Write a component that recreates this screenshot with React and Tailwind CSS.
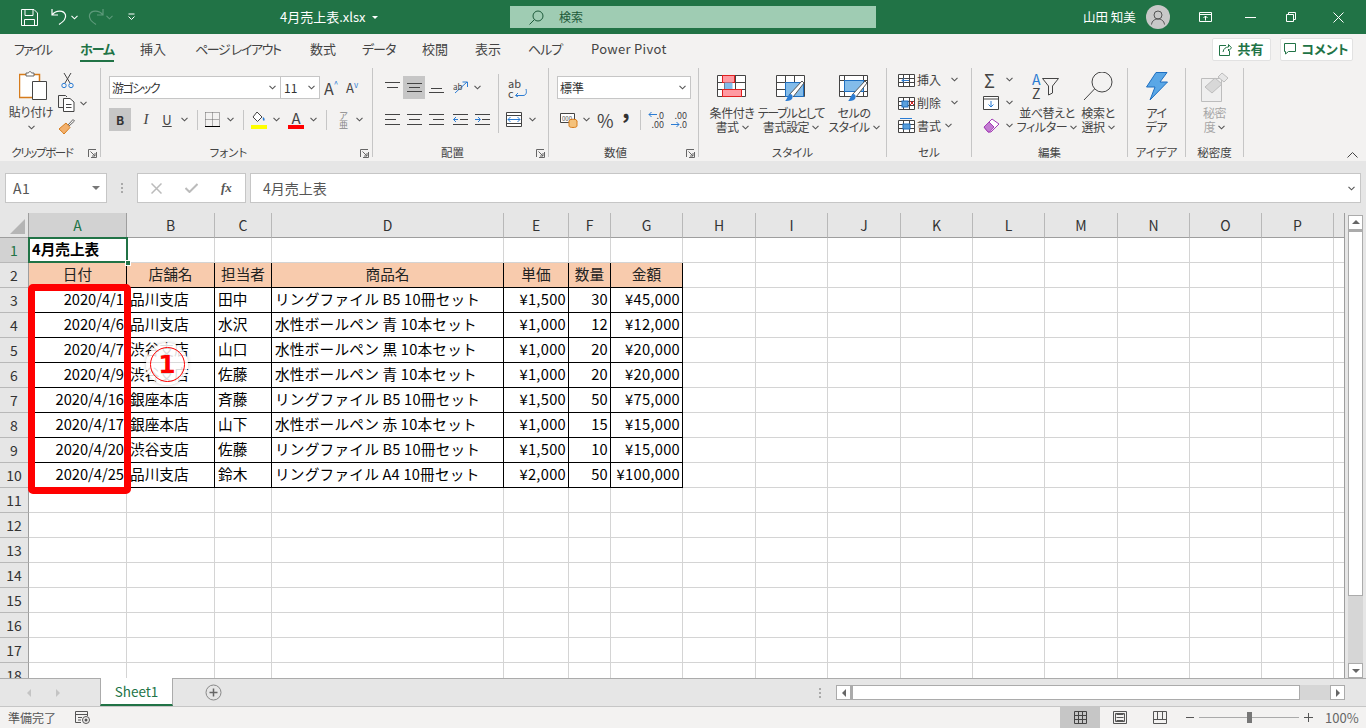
import React from "react";

const Chevron = ({ color = "#555", className = "" }) => (
  <svg width="7" height="5" viewBox="0 0 7 5" className={className}>
    <path d="M0.5 0.8 L3.5 3.8 L6.5 0.8" fill="none" stroke={color} strokeWidth="1.1" />
  </svg>
);

const Launcher = () => (
  <svg width="9" height="9" viewBox="0 0 9 9" className="absolute right-[3px] top-[4px]">
    <path d="M0.5 8V0.5H8M8.5 3V8.5H3M2.5 2.5L7 7M7 4V7H4" fill="none" stroke="#666" strokeWidth="1" />
  </svg>
);

const Lines = ({ widths, y = [2, 7, 12] }) => (
  <svg width="15" height="15" viewBox="0 0 15 15">
    {widths.map((w, i) => (
      <path key={i} d={`M${w[0]} ${y[i] + 0.5}H${w[1]}`} stroke="#444" strokeWidth="1" />
    ))}
  </svg>
);

const GridIcon = ({ children }) => (
  <svg width="18" height="16" viewBox="0 0 18 16">
    <path d="M0.5 2.5H16.5V14.5H0.5ZM0.5 6.5H16.5M0.5 10.5H16.5M5.5 2.5V14.5M11.5 2.5V14.5" fill="#fff" stroke="#444" />
    {children}
  </svg>
);

function TitleBar() {
  return (
    <div className="h-[34px] bg-[#217346] flex items-center text-white text-[12px]">
      <svg width="17" height="17" viewBox="0 0 17 17" className="ml-[21px]">
        <path d="M0.5 0.5H13L16.5 4V16.5H0.5ZM4 0.5V6.5H12V0.5M3.5 16.5V10.5H13.5V16.5" fill="none" stroke="#fff" />
      </svg>
      <svg width="17" height="18" viewBox="0 0 17 18" className="ml-[13px]">
        <path d="M1 1V7H7M1.5 6.5C5 2 13 2 14.5 7C15.5 11 12 14 8 16.5" fill="none" stroke="#fff" strokeWidth="1.2" />
      </svg>
      <Chevron color="#fff" className="ml-[3px]" />
      <svg width="17" height="18" viewBox="0 0 17 18" className="ml-[9px]">
        <path d="M16 1V7H10M15.5 6.5C12 2 4 2 2.5 7C1.5 11 5 14 9 16.5" fill="none" stroke="#5e9a7b" strokeWidth="1.2" />
      </svg>
      <Chevron color="#5e9a7b" className="ml-[2px]" />
      <svg width="7" height="8" viewBox="0 0 7 8" className="ml-[15px]">
        <path d="M0.5 1H6.5M0.5 3.5L3.5 6.5L6.5 3.5" fill="none" stroke="#fff" />
      </svg>
      <span className="ml-[145px] w-[87px] text-[13px] whitespace-nowrap">4月売上表.xlsx</span>
      <span className="ml-[5px] w-0 h-0 border-x-[3px] border-x-transparent border-t-[3px] border-t-white" />
      <div className="ml-[132px] w-[366px] h-[22px] bg-[#9fccb3] flex items-center text-[#1d5a3a]">
        <svg width="15" height="15" viewBox="0 0 15 15" className="ml-[19px]">
          <circle cx="9" cy="6" r="5" fill="none" stroke="#1d5a3a" />
          <path d="M5.5 9.5L0.5 14.5" stroke="#1d5a3a" />
        </svg>
        <span className="ml-[15px]">検索</span>
      </div>
      <span className="ml-[207px] w-[54px] whitespace-nowrap text-[12.5px]">山田 知美</span>
      <div className="ml-[9px] w-[24px] h-[24px] rounded-full bg-[#c8c8c8] flex items-center justify-center">
        <svg width="14" height="15" viewBox="0 0 14 15">
          <circle cx="7" cy="5" r="4" fill="none" stroke="#555" />
          <path d="M0.5 14.5C1 10.5 4 9 7 9C10 9 13 10.5 13.5 14.5" fill="none" stroke="#555" />
        </svg>
      </div>
      <svg width="13" height="11" viewBox="0 0 13 11" className="ml-[29px]">
        <path d="M0.5 0.5H12.5V9.5H0.5ZM0.5 2.5H12.5M6.5 8.5V4M4.5 6L6.5 4L8.5 6" fill="none" stroke="#fff" />
      </svg>
      <svg width="11" height="1" viewBox="0 0 11 1" className="ml-[33px]">
        <path d="M0 0.5H11" stroke="#fff" />
      </svg>
      <svg width="10" height="10" viewBox="0 0 10 10" className="ml-[30px]">
        <path d="M0.5 2.5H7.5V9.5H0.5ZM2.5 2.5V0.5H9.5V7.5H7.5" fill="none" stroke="#fff" />
      </svg>
      <svg width="11" height="11" viewBox="0 0 11 11" className="ml-[37px]">
        <path d="M0.5 0.5L10.5 10.5M10.5 0.5L0.5 10.5" fill="none" stroke="#fff" />
      </svg>
    </div>
  );
}

function TabBar() {
  const tabs = [
    { label: "ファイル", cls: "w-[66px] tracking-[-2px]" },
    { label: "ホーム", cls: "w-[60px] font-bold text-[#217346] tracking-[-1px]" },
    { label: "挿入", cls: "w-[55px]" },
    { label: "ページ レイアウト", cls: "w-[115px] tracking-[-1.4px]" },
    { label: "数式", cls: "w-[52px]" },
    { label: "データ", cls: "w-[60px] tracking-[-1px]" },
    { label: "校閲", cls: "w-[53px]" },
    { label: "表示", cls: "w-[53px]" },
    { label: "ヘルプ", cls: "w-[63px] tracking-[-1px]" },
    { label: "Power Pivot", cls: "w-[80px] tracking-[0.3px]" },
  ];
  return (
    <div className="h-[30px] bg-[#f3f2f1] flex items-center pl-[14px] text-[13px] text-[#444] relative [font-feature-settings:'palt']">
      {tabs.map((t) => (
        <span key={t.label} className={`${t.cls} relative whitespace-nowrap`}>
          {t.label}
          {t.label === "ホーム" && <span className="absolute left-0 top-[21px] w-[34px] h-[2px] bg-[#217346]" />}
        </span>
      ))}
      <div className="ml-auto mr-[13px] flex gap-[9px]">
        <div className="w-[59px] h-[23px] bg-white border border-[#e2e2e2] rounded-[2px] flex items-center justify-center gap-[5px] text-[#217346] font-bold">
          <svg width="13" height="13" viewBox="0 0 13 13">
            <path d="M7 2.5H0.5V12.5H10.5V8M4 9C4.5 5.5 7 4 9.5 4V1.5L12.5 4.8L9.5 8V6" fill="none" stroke="#217346" />
          </svg>
          共有
        </div>
        <div className="w-[73px] h-[23px] bg-white border border-[#e2e2e2] rounded-[2px] flex items-center justify-center gap-[5px] text-[#217346] font-bold">
          <svg width="12" height="12" viewBox="0 0 12 12">
            <path d="M0.5 0.5H11.5V8.5H4.5L1.5 11V8.5H0.5Z" fill="none" stroke="#217346" />
          </svg>
          コメント
        </div>
      </div>
    </div>
  );
}

const Group = ({ label, cls, labelCls = "", launcher, children }) => (
  <div className={`${cls} h-[89px] mt-[4px] border-r border-[#c6c6c6] flex flex-col shrink-0`}>
    <div className="flex-1 min-h-0">{children}</div>
    <div
      className={`relative h-[15px] -mb-[3px] leading-[15px] text-center text-[11.5px] text-[#444] whitespace-nowrap [font-feature-settings:'palt'] ${
        launcher ? "pr-[16px]" : ""
      } ${labelCls}`}
    >
      {label}
      {launcher && <Launcher />}
    </div>
  </div>
);

const Row = ({ cls = "", children }) => <div className={`flex items-center h-[23px] ${cls}`}>{children}</div>;

function Clipboard() {
  return (
    <Group label="クリップボード" cls="w-[101px]" labelCls="tracking-[-1.4px]" launcher>
      <div className="flex h-full">
        <div className="w-[58px] pl-[4px] pt-[3px] flex flex-col items-center">
          <svg width="28" height="30" viewBox="0 0 28 30" className="ml-[3px]">
            <path d="M0.5 3.5H20.5V26.5H0.5Z" fill="#fff" stroke="#d67c1c" strokeWidth="1.5" />
            <path d="M7 5V2H9.5C10 0 12 0 12.5 2H15V5Z" fill="#fff" stroke="#666" />
            <path d="M13.5 10.5H27.5V28.5H13.5Z" fill="#fff" stroke="#444" />
          </svg>
          <span className="mt-[4px] text-[12px] text-[#444] leading-[14px] whitespace-nowrap tracking-[-0.3px] [font-feature-settings:'palt']">貼り付け</span>
          <Chevron className="mt-[6px]" />
        </div>
        <div className="pt-[4px] flex flex-col gap-[6px]">
          <svg width="13" height="17" viewBox="0 0 13 17" className="ml-[3px]">
            <path d="M3 1L9 11M10 1L4 11" fill="none" stroke="#444" />
            <circle cx="3" cy="13.5" r="2.2" fill="none" stroke="#2b7cd3" />
            <circle cx="10" cy="13.5" r="2.2" fill="none" stroke="#2b7cd3" />
          </svg>
          <div className="flex items-center gap-[5px]">
            <svg width="17" height="17" viewBox="0 0 17 17">
              <path d="M5 12.5H0.5V0.5H7.5L9 2" fill="none" stroke="#444" />
              <path d="M5.5 3.5H12L16 7V16.5H5.5ZM8 9.5H13.5M8 12.5H13.5" fill="#fff" stroke="#444" />
            </svg>
            <Chevron />
          </div>
          <svg width="17" height="17" viewBox="0 0 17 17">
            <path d="M10 7L15 1.5L16.5 3L11 8" fill="none" stroke="#666" />
            <path d="M1 11L8 5L12 9.5L6 16C4 14 2.5 12 1 11Z" fill="#f2b06c" stroke="#d67c1c" />
          </svg>
        </div>
      </div>
    </Group>
  );
}

function FontGroup() {
  return (
    <Group label="フォント" cls="w-[272px]" launcher>
      <div className="pt-[8px] pl-[8px]">
        <Row>
          <div className="w-[172px] h-[23px] bg-white border border-[#c6c6c6] flex items-center pl-[2px] pr-[4px] text-[12px] text-[#333] justify-between">
            <span className="tracking-[-1.5px] [font-feature-settings:'palt']">游ゴシック</span>
            <Chevron />
          </div>
          <div className="w-[40px] -ml-[1px] h-[23px] bg-white border border-[#c6c6c6] flex items-center pl-[3px] pr-[4px] text-[12px] text-[#333] justify-between">
            11
            <Chevron />
          </div>
          <span className="ml-[4px] w-[22px] text-[16px] text-[#444] leading-none">
            A<span className="text-[8px] align-top text-[#2b7cd3]">^</span>
          </span>
          <span className="w-[17px] text-[13px] text-[#444] leading-none">
            A<span className="text-[8px] align-top text-[#2b7cd3]">v</span>
          </span>
        </Row>
        <Row cls="mt-[9px]">
          <span className="w-[22px] h-[23px] bg-[#c6c6c6] flex items-center justify-center text-[12px] font-bold text-[#333]">B</span>
          <span className="ml-[8px] w-[14px] text-center text-[15px] italic text-[#444] font-['Liberation_Serif',serif]">I</span>
          <span className="ml-[7px] w-[14px] text-center text-[13px] text-[#444] underline">U</span>
          <Chevron className="ml-[7px]" />
          <span className="ml-[9px] h-[20px] w-px bg-[#c6c6c6]" />
          <svg width="15" height="15" viewBox="0 0 15 15" className="ml-[7px]">
            <path d="M0.5 0.5H14.5V14.5M0.5 0.5V14.5M7.5 0.5V14.5M0.5 7.5H14.5" fill="none" stroke="#666" strokeDasharray="1 1" />
            <path d="M0 14.5H15" stroke="#000" />
          </svg>
          <Chevron className="ml-[7px]" />
          <span className="ml-[9px] h-[20px] w-px bg-[#c6c6c6]" />
          <div className="ml-[7px] w-[16px] h-[18px] flex flex-col items-center justify-between">
            <svg width="14" height="12" viewBox="0 0 14 12">
              <path d="M5 1L1 6L5.5 10.5L10 6Z" fill="#fff" stroke="#444" />
              <path d="M11 6C13 7 13 9 12 10C10.5 9.5 10.5 7 11 6Z" fill="#2b7cd3" />
            </svg>
            <span className="w-[16px] h-[4px] bg-[#ffff00]" />
          </div>
          <Chevron className="ml-[6px]" />
          <div className="ml-[8px] w-[16px] h-[18px] flex flex-col items-center justify-between">
            <span className="text-[15px] leading-[14px] text-[#444]">A</span>
            <span className="w-[16px] h-[4px] bg-[#ff0000]" />
          </div>
          <Chevron className="ml-[6px]" />
          <span className="ml-[9px] h-[20px] w-px bg-[#c6c6c6]" />
          <div className="ml-[11px] w-[11px] flex flex-col items-center leading-[9px] text-[9px] text-[#888]">
            <span>ア</span>
            <span>亜</span>
          </div>
          <Chevron className="ml-[7px]" />
        </Row>
      </div>
    </Group>
  );
}

function AlignGroup() {
  return (
    <Group label="配置" cls="w-[176px]" launcher>
      <div className="pt-[8px] pl-[8px] flex">
        <div className="w-[117px] flex flex-col gap-[9px]">
          <Row>
            <span className="w-[22px] flex justify-center"><Lines widths={[[0, 15], [2, 13]]} /></span>
            <span className="w-[22px] h-[23px] bg-[#c6c6c6] flex items-center justify-center"><Lines widths={[[0, 15], [2, 13], [0, 15]]} y={[3, 7, 11]} /></span>
            <span className="w-[22px] flex justify-center"><Lines widths={[[2, 13], [0, 15]]} y={[8, 12]} /></span>
            <svg width="18" height="16" viewBox="0 0 18 16" className="ml-[6px]">
              <path d="M2 13L14 2M9.5 2H14.5V7" fill="none" stroke="#2b7cd3" />
              <text x="0" y="10" fontSize="8" fill="#444">ab</text>
            </svg>
            <Chevron className="ml-[3px]" />
          </Row>
          <Row>
            <span className="w-[22px] flex justify-center"><Lines widths={[[0, 15], [0, 11], [0, 15]]} /></span>
            <span className="w-[22px] flex justify-center"><Lines widths={[[0, 15], [2, 13], [0, 15]]} /></span>
            <span className="w-[22px] flex justify-center"><Lines widths={[[0, 15], [4, 15], [0, 15]]} /></span>
            <svg width="15" height="15" viewBox="0 0 15 15" className="ml-[6px]">
              <path d="M0 2.5H15M7 7.5H15M0 12.5H15" stroke="#444" />
              <path d="M5 7.5H0.5M3 5L0.5 7.5L3 10" fill="none" stroke="#2b7cd3" />
            </svg>
            <svg width="15" height="15" viewBox="0 0 15 15" className="ml-[7px]">
              <path d="M0 2.5H15M7 7.5H15M0 12.5H15" stroke="#444" />
              <path d="M0 7.5H5M3 5L5.5 7.5L3 10" fill="none" stroke="#2b7cd3" />
            </svg>
          </Row>
        </div>
        <span className="h-[59px] w-px bg-[#c6c6c6] -mt-[2px]" />
        <div className="ml-[7px] flex flex-col gap-[9px]">
          <Row>
            <div className="relative ml-[2px] w-[20px] h-[20px] leading-[10px] text-[11px] text-[#444]">
              ab
              <br />c
              <svg width="13" height="9" viewBox="0 0 13 9" className="absolute left-[7px] top-[10px]">
                <path d="M1 7.5H8C11 7.5 12 5 11 1M3 5L0.5 7.5L3 9" fill="none" stroke="#2b7cd3" />
              </svg>
            </div>
          </Row>
          <Row>
            <svg width="16" height="15" viewBox="0 0 16 15">
              <path d="M0.5 0.5H15.5V14.5H0.5ZM0.5 3.5H15.5M0.5 11.5H15.5" fill="#fff" stroke="#444" />
              <path d="M2 7.5H14M4.5 5L2 7.5L4.5 10M11.5 5L14 7.5L11.5 10" fill="none" stroke="#2b7cd3" />
            </svg>
            <Chevron className="ml-[7px]" />
          </Row>
        </div>
      </div>
    </Group>
  );
}

function NumberGroup() {
  return (
    <Group label="数値" cls="w-[150px]" launcher>
      <div className="pt-[8px] pl-[8px]">
        <Row>
          <div className="w-[134px] h-[23px] bg-white border border-[#c6c6c6] flex items-center justify-between pl-[2px] pr-[4px] text-[12px] text-[#333]">
            標準
            <Chevron />
          </div>
        </Row>
        <Row cls="mt-[9px]">
          <svg width="18" height="17" viewBox="0 0 18 17" className="ml-[3px]">
            <path d="M0.5 2.5H14.5V11.5H0.5Z" fill="#fff" stroke="#444" />
            <text x="2" y="9.5" fontSize="6" fill="#444">000</text>
            <ellipse cx="13" cy="10" rx="4" ry="1.8" fill="#f4c27c" stroke="#d67c1c" />
            <path d="M9 10V15C9 17 17 17 17 15V10" fill="#f4c27c" stroke="#d67c1c" />
          </svg>
          <Chevron className="ml-[5px]" />
          <span className="ml-[7px] w-[17px] text-[18px] leading-none text-[#444]">%</span>
          <span className="ml-[8px] w-[9px] text-[24px] leading-[14px] font-bold text-[#333] h-[18px] -translate-y-[10px]">,</span>
          <span className="ml-[9px] h-[20px] w-px bg-[#c6c6c6]" />
          <div className="ml-[7px] w-[16px] relative h-[18px] leading-[9px] text-[9px] text-[#444] text-right">
            .0
            <br />.00
            <svg width="9" height="7" viewBox="0 0 9 7" className="absolute left-0 top-0">
              <path d="M9 3.5H1M3.5 1L1 3.5L3.5 6" fill="none" stroke="#2b7cd3" />
            </svg>
          </div>
          <div className="ml-[7px] w-[16px] relative h-[18px] leading-[9px] text-[9px] text-[#444] text-right">
            .00
            <br />.0
            <svg width="9" height="7" viewBox="0 0 9 7" className="absolute left-0 top-[10px]">
              <path d="M0 3.5H8M5.5 1L8 3.5L5.5 6" fill="none" stroke="#2b7cd3" />
            </svg>
          </div>
        </Row>
      </div>
    </Group>
  );
}

const Brush = () => (
  <>
    <path d="M13 21L26 7L28 9L17 23" fill="#fff" stroke="#555" />
    <path d="M9 27C11 26 11 22 14 20C17 20 17 23 16 25C14 27 11 27 9 27Z" fill="#2b7cd3" />
  </>
);

const TableGrid = ({ children }) => (
  <svg width="30" height="28" viewBox="0 0 30 28">
    {children}
  </svg>
);

const BigButton = ({ cls, icon, l1, l2, l1Cls = "tracking-[-0.4px]", chevron = true, color = "text-[#444]" }) => (
  <div className={`${cls} flex flex-col items-center pt-[6px]`}>
    <div className="h-[31px]">{icon}</div>
    <span className={`mt-[1px] h-[14px] text-[12px] leading-[14px] whitespace-nowrap ${l1Cls} ${color} [font-feature-settings:'palt']`}>{l1}</span>
    <span className={`h-[14px] text-[12px] leading-[14px] whitespace-nowrap tracking-[-0.4px] flex items-center gap-[3px] ${color} [font-feature-settings:'palt']`}>
      {l2}
      {chevron && <Chevron />}
    </span>
  </div>
);

function StyleGroup() {
  return (
    <Group label="スタイル" cls="w-[188px]">
      <div className="flex pl-[8px]">
        <BigButton
          cls="w-[50px]"
          l1="条件付き"
          l2="書式"
          icon={
            <TableGrid>
              <path d="M0.5 0.5H28.5V21.5H0.5ZM0.5 7.5H28.5M0.5 14.5H28.5M7.5 0.5V21.5M18.5 0.5V21.5" fill="#fff" stroke="#444" transform="translate(0 1)" />
              <rect x="5.5" y="1.5" width="12" height="7" fill="#ff9aa2" stroke="#e02020" />
              <rect x="7.5" y="8.5" width="8" height="7" fill="#83bcea" />
              <rect x="5.5" y="15.5" width="19" height="7" fill="#ff9aa2" stroke="#e02020" />
            </TableGrid>
          }
        />
        <BigButton
          cls="w-[66px] ml-[1px]"
          l1="テーブルとして"
          l1Cls="tracking-[-1.2px]"
          l2="書式設定"
          icon={
            <TableGrid>
              <path d="M0.5 1.5H28.5V22.5H0.5ZM0.5 8.5H28.5M0.5 15.5H28.5M9.5 1.5V22.5M18.5 1.5V22.5" fill="#fff" stroke="#444" />
              <path d="M9.5 8.5H27.5V22.5H9.5Z" fill="#83bcea" stroke="#1f6fc0" />
              <Brush />
            </TableGrid>
          }
        />
        <BigButton
          cls="w-[60px]"
          l1="セルの"
          l2="スタイル"
          icon={
            <TableGrid>
              <path d="M0.5 1.5H28.5V22.5H0.5ZM0.5 6.5H28.5M0.5 17.5H28.5M5.5 1.5V22.5M24.5 1.5V22.5" fill="#fff" stroke="#444" />
              <rect x="5.5" y="6.5" width="19" height="11" fill="#83bcea" stroke="#1f6fc0" />
              <Brush />
            </TableGrid>
          }
        />
      </div>
    </Group>
  );
}

function CellGroup() {
  return (
    <Group label="セル" cls="w-[85px]">
      <div className="pl-[11px] flex flex-col text-[12px] text-[#444]">
        <div className="flex items-center h-[23px]">
          <GridIcon>
            <path d="M4 8.5H11M6.5 6L4 8.5L6.5 11" fill="none" stroke="#2b7cd3" />
          </GridIcon>
          <span className="ml-[1px] w-[34px]">挿入</span>
          <Chevron />
        </div>
        <div className="flex items-center h-[23px]">
          <GridIcon>
            <rect x="4" y="6" width="6" height="6" fill="#5aa0dc" stroke="#1f6fc0" />
            <path d="M12 6L16 10M16 6L12 10" stroke="#e02020" />
          </GridIcon>
          <span className="ml-[1px] w-[34px]">削除</span>
          <Chevron />
        </div>
        <div className="flex items-center h-[23px]">
          <GridIcon>
            <rect x="5" y="6" width="7" height="5" fill="#5aa0dc" stroke="#1f6fc0" />
            <path d="M2 0.5H14" stroke="#2b7cd3" />
          </GridIcon>
          <span className="ml-[1px] w-[28px]">書式</span>
          <Chevron />
        </div>
      </div>
    </Group>
  );
}

function EditGroup() {
  return (
    <Group label="編集" cls="w-[156px]">
      <div className="flex pl-[11px]">
        <div className="w-[35px] flex flex-col">
          <div className="flex items-center h-[23px]">
            <span className="w-[23px] text-[18px] leading-none text-[#444] pl-[1px]">Σ</span>
            <Chevron />
          </div>
          <div className="flex items-center h-[23px]">
            <svg width="16" height="14" viewBox="0 0 16 14" className="mr-[7px]">
              <path d="M0.5 0.5H15.5V13.5H0.5ZM0.5 3H15.5" fill="#fff" stroke="#444" />
              <path d="M8 5V11M5.5 8.5L8 11L10.5 8.5" fill="none" stroke="#2b7cd3" />
            </svg>
            <Chevron />
          </div>
          <div className="flex items-center h-[23px]">
            <svg width="17" height="15" viewBox="0 0 17 15" className="mr-[6px]">
              <path d="M1 9L9 1L16 6L8 14H5Z" fill="#fff" stroke="#a33fb5" />
              <path d="M1 9L6 4L11 9L6.5 14H5Z" fill="#c27bd1" stroke="#a33fb5" />
            </svg>
            <Chevron />
          </div>
        </div>
        <BigButton
          cls="w-[58px]"
          l1="並べ替えと"
          l2="フィルター"
          icon={
            <div className="flex w-[30px] h-[29px] -mt-[2px] text-[14px] leading-[14px] text-[#2b7cd3]">
              <div className="flex flex-col items-center">
                <span>A</span>
                <span className="text-[#444]">Z</span>
              </div>
              <svg width="17" height="18" viewBox="0 0 17 18" className="ml-[1px] mt-[6px]">
                <path d="M0.5 0.5H16.5L10.5 8V15L6.5 17V8Z" fill="none" stroke="#444" />
              </svg>
            </div>
          }
        />
        <BigButton
          cls="w-[44px]"
          l1="検索と"
          l2="選択"
          icon={
            <svg width="30" height="29" viewBox="0 0 30 29" className="-mt-[2px]">
              <circle cx="19" cy="10" r="10" fill="none" stroke="#444" />
              <path d="M11.5 17L1 28" stroke="#444" />
            </svg>
          }
        />
      </div>
    </Group>
  );
}

function Ideas() {
  return (
    <Group label="アイデア" cls="w-[58px]">
      <BigButton
        cls="w-full"
        l1="アイ"
        l2="デア"
        chevron={false}
        icon={
          <svg width="22" height="29" viewBox="0 0 22 29" className="-mt-[2px]">
            <path d="M10 0.5H21L14 10H21.5L4 28L9 15H0.5Z" fill="#5aa7e6" stroke="#1f6fc0" />
          </svg>
        }
      />
    </Group>
  );
}

function Sensitivity() {
  return (
    <Group label="秘密度" cls="w-[58px]">
      <BigButton
        cls="w-full"
        l1="秘密"
        l2="度"
        color="text-[#a6a6a6]"
        icon={
          <svg width="28" height="30" viewBox="0 0 28 30" className="-mt-[2px]">
            <path d="M0.5 6.5H20.5V29.5H0.5Z" fill="#efefef" stroke="#bdbdbd" />
            <path d="M4 15L14 6L21 12L11 21Z" fill="#d8d8d8" stroke="#bdbdbd" />
            <path d="M17 5L21 1L27 6L23 10Z" fill="#e6e6e6" stroke="#bdbdbd" />
          </svg>
        }
      />
    </Group>
  );
}

function Ribbon() {
  return (
    <div className="h-[97px] bg-[#f3f2f1] flex relative">
      <Clipboard />
      <FontGroup />
      <AlignGroup />
      <NumberGroup />
      <StyleGroup />
      <CellGroup />
      <EditGroup />
      <Ideas />
      <Sensitivity />
      <svg width="11" height="6" viewBox="0 0 11 6" className="absolute right-[8px] bottom-[3px]">
        <path d="M0.5 5.5L5.5 0.5L10.5 5.5" fill="none" stroke="#444" />
      </svg>
    </div>
  );
}

function FormulaBar() {
  return (
    <div className="h-[52px] bg-[#e6e6e6] flex items-start pt-[12px] pl-[5px] pr-[5px] text-[#444]">
      <div className="w-[102px] h-[30px] bg-white border border-[#c6c6c6] flex items-center justify-between pl-[7px] pr-[6px] text-[14px] tracking-[0.5px] text-[#555]">
        A1
        <span className="w-0 h-0 border-x-[4px] border-x-transparent border-t-[4px] border-t-[#777]" />
      </div>
      <div className="w-[30px] h-[30px] flex flex-col items-center justify-center gap-[2px]">
        <span className="w-[2px] h-[2px] bg-[#aaa]" />
        <span className="w-[2px] h-[2px] bg-[#aaa]" />
        <span className="w-[2px] h-[2px] bg-[#aaa]" />
      </div>
      <div className="w-[109px] h-[30px] bg-white border border-[#c6c6c6] flex items-center">
        <svg width="11" height="11" viewBox="0 0 11 11" className="ml-[13px]">
          <path d="M0.5 0.5L10.5 10.5M10.5 0.5L0.5 10.5" fill="none" stroke="#bbb" strokeWidth="1.5" />
        </svg>
        <svg width="13" height="10" viewBox="0 0 13 10" className="ml-[23px]">
          <path d="M0.5 5L4.5 9L12.5 1" fill="none" stroke="#bbb" strokeWidth="2" />
        </svg>
        <span className="ml-[23px] text-[13px] italic font-bold text-[#555] font-['Liberation_Serif',serif]">fx</span>
      </div>
      <div className="ml-[4px] flex-1 h-[30px] bg-white border border-[#c6c6c6] flex items-center justify-between pl-[12px] pr-[5px] text-[14px] text-[#555]">
        4月売上表
        <Chevron />
      </div>
    </div>
  );
}

const colLetters = ["A", "B", "C", "D", "E", "F", "G", "H", "I", "J", "K", "L", "M", "N", "O", "P", ""];

const data = [
  ["日付", "店舗名", "担当者", "商品名", "単価", "数量", "金額"],
  ["2020/4/1", "品川支店", "田中", "リングファイル B5 10冊セット", "¥1,500", "30", "¥45,000"],
  ["2020/4/6", "品川支店", "水沢", "水性ボールペン 青 10本セット", "¥1,000", "12", "¥12,000"],
  ["2020/4/7", "渋谷支店", "山口", "水性ボールペン 黒 10本セット", "¥1,000", "20", "¥20,000"],
  ["2020/4/9", "渋谷支店", "佐藤", "水性ボールペン 青 10本セット", "¥1,000", "20", "¥20,000"],
  ["2020/4/16", "銀座本店", "斉藤", "リングファイル B5 10冊セット", "¥1,500", "50", "¥75,000"],
  ["2020/4/17", "銀座本店", "山下", "水性ボールペン 赤 10本セット", "¥1,000", "15", "¥15,000"],
  ["2020/4/20", "渋谷支店", "佐藤", "リングファイル B5 10冊セット", "¥1,500", "10", "¥15,000"],
  ["2020/4/25", "品川支店", "鈴木", "リングファイル A4 10冊セット", "¥2,000", "50", "¥100,000"],
];

const rightCols = [0, 4, 5, 6];

function Sheet() {
  const rows = Array.from({ length: 18 }, (_, i) => i + 1);
  return (
    <div className="relative flex-1 w-[1345px] h-[465px] overflow-hidden bg-white border-r border-[#9e9e9e]">
      <div className="grid grid-cols-[29px_98px_88px_57px_232px_65px_42px_72px_73px_72px_73px_72px_72px_73px_72px_72px_72px_11px] auto-rows-[25px] text-[14.67px] text-black">
        {/* header row */}
        <div className="bg-[#e6e6e6] border-r border-b border-[#9e9e9e] flex items-end justify-end p-[3px]">
          <span className="w-0 h-0 border-l-[15px] border-l-transparent border-b-[15px] border-b-[#b5b5b5]" />
        </div>
        {colLetters.map((c, i) => (
          <div
            key={i}
            className={`border-b border-[#9e9e9e] border-r flex items-center justify-center text-[14px] ${
              i === 0 ? "bg-[#d2d2d2] text-[#217346] border-r-[#9e9e9e]" : "bg-[#e6e6e6] text-[#333] border-r-[#b8b8b8]"
            }`}
          >
            {c}
          </div>
        ))}
        {rows.map((r) => (
          <React.Fragment key={r}>
            <div
              className={`border-r border-b flex items-center justify-center text-[14px] ${
                r === 1
                  ? "bg-[#d2d2d2] text-[#217346] border-r-[#9e9e9e] border-b-[#b8b8b8]"
                  : "bg-[#e6e6e6] text-[#333] border-r-[#9e9e9e] border-b-[#b8b8b8]"
              }`}
            >
              {r}
            </div>
            {colLetters.map((_, c) => {
              const inTable = r >= 2 && r <= 10 && c <= 6;
              const isHead = r === 2 && c <= 6;
              const right = inTable && !isHead && rightCols.includes(c);
              const text = inTable ? data[r - 2][c] : "";
              return (
                <div
                  key={c}
                  className={`border-r border-b whitespace-nowrap flex items-center pb-[2px] ${
                    right ? "pl-[3px] pr-[2px]" : "px-[3px]"
                  } ${right && c !== 0 ? "tracking-[0.3px]" : ""} ${c === 3 && !isHead ? "tracking-[0.2px]" : ""} ${
                    inTable ? "border-black" : "border-[#d4d4d4]"
                  } ${isHead ? "bg-[#f8cbad] justify-center text-[#222]" : ""} ${right ? "justify-end" : ""}`}
                >
                  {r === 1 && c === 0 ? <span className="font-bold">4月売上表</span> : text}
                </div>
              );
            })}
          </React.Fragment>
        ))}
      </div>
      {/* A1 selection */}
      <div className="absolute left-[28px] top-[24px] w-[100px] h-[26px] border-2 border-[#217346]" />
      <div className="absolute left-[125px] top-[47px] w-[6px] h-[6px] bg-[#217346] border border-white" />
      {/* annotation */}
      <div className="absolute left-[28px] top-[71px] w-[103px] h-[210px] border-[7px] border-[#ff0000] rounded-[5px]" />
      <div className="absolute left-[146px] top-[130px] w-[42px] h-[42px] rounded-full bg-white/85 shadow-[0_0_4px_rgba(0,0,0,0.2)] flex items-center justify-center">
        <div className="w-[35px] h-[35px] rounded-full border border-[#ff0000] flex items-center justify-center text-[#ff0000] font-bold text-[25px] leading-none font-['DejaVu_Sans',sans-serif]">
          1
        </div>
      </div>
    </div>
  );
}

function VScroll() {
  return (
    <div className="w-[21px] h-[465px] bg-[#e6e6e6] flex flex-col items-center pt-[2px] shrink-0">
      <div className="w-[15px] h-[15px] bg-white border border-[#ababab] flex items-center justify-center">
        <span className="w-0 h-0 border-x-[4px] border-x-transparent border-b-[4px] border-b-[#666]" />
      </div>
      <div className="w-[15px] h-[367px] bg-white border border-[#ababab] border-t-2" />
      <div className="w-[15px] h-[67px] bg-[#d6d6d6]" />
      <div className="w-[15px] h-[15px] bg-white border border-[#ababab] flex items-center justify-center">
        <span className="w-0 h-0 border-x-[4px] border-x-transparent border-t-[4px] border-t-[#666]" />
      </div>
    </div>
  );
}

function SheetTabs() {
  return (
    <div className="h-[28px] bg-[#e6e6e6] border-t border-[#ababab] flex items-stretch">
      <div className="w-[100px] flex items-center">
        <span className="ml-[27px] w-0 h-0 border-y-[4px] border-y-transparent border-r-[4px] border-r-[#c4c4c4]" />
        <span className="ml-[25px] w-0 h-0 border-y-[4px] border-y-transparent border-l-[4px] border-l-[#c4c4c4]" />
      </div>
      <div className="w-[73px] -mt-px h-[28px] bg-white border-x border-[#ababab] border-b-[2px] border-b-[#217346] flex items-center justify-center text-[13.5px] text-[#217346]">
        Sheet1
      </div>
      <div className="ml-[32px] flex items-center">
        <svg width="17" height="17" viewBox="0 0 17 17">
          <circle cx="8.5" cy="8.5" r="7.5" fill="none" stroke="#888" />
          <path d="M8.5 4.5V12.5M4.5 8.5H12.5" stroke="#666" strokeWidth="1.5" />
        </svg>
      </div>
      <div className="ml-[597px] flex flex-col justify-center gap-[2px] w-[2px]">
        <span className="w-[2px] h-[2px] bg-[#aaa]" />
        <span className="w-[2px] h-[2px] bg-[#aaa]" />
        <span className="w-[2px] h-[2px] bg-[#aaa]" />
      </div>
      <div className="ml-[15px] flex items-center">
        <div className="w-[15px] h-[15px] bg-white border border-[#ababab] flex items-center justify-center">
          <span className="w-0 h-0 border-y-[4px] border-y-transparent border-r-[4px] border-r-[#666]" />
        </div>
        <div className="w-[449px] h-[15px] bg-white border border-[#ababab] border-l-2" />
        <div className="w-[30px] h-[15px] bg-[#d6d6d6]" />
        <div className="w-[15px] h-[15px] bg-white border border-[#ababab] flex items-center justify-center">
          <span className="w-0 h-0 border-y-[4px] border-y-transparent border-l-[4px] border-l-[#666]" />
        </div>
      </div>
    </div>
  );
}

function StatusBar() {
  return (
    <div className="h-[22px] bg-[#f3f2f1] border-t border-[#c6c6c6] flex items-center text-[12px] text-[#555]">
      <span className="ml-[8px] w-[48px] whitespace-nowrap">準備完了</span>
      <svg width="15" height="13" viewBox="0 0 15 13" className="ml-[19px]">
        <path d="M12.5 5V0.5H0.5V11.5H6M0.5 3.5H12.5M3 6.5H7M3 9H6" fill="none" stroke="#555" />
        <circle cx="11" cy="9" r="3.5" fill="none" stroke="#555" />
        <circle cx="11" cy="9" r="1.5" fill="#555" />
      </svg>
      <div className="ml-[970px] w-[40px] h-[21px] bg-[#c6c6c6] flex items-center justify-center">
        <svg width="13" height="13" viewBox="0 0 13 13">
          <path d="M0.5 0.5H12.5V12.5H0.5ZM0.5 4.5H12.5M0.5 8.5H12.5M4.5 0.5V12.5M8.5 0.5V12.5" fill="none" stroke="#444" />
        </svg>
      </div>
      <div className="w-[40px] flex justify-center">
        <svg width="14" height="13" viewBox="0 0 14 13">
          <path d="M0.5 0.5H13.5V12.5H0.5ZM3.5 3.5H10.5M3.5 6.5H10.5M3.5 9.5H10.5M2.5 2.5H11.5V10.5H2.5Z" fill="none" stroke="#555" />
        </svg>
      </div>
      <div className="w-[40px] flex justify-center">
        <svg width="14" height="13" viewBox="0 0 14 13">
          <path d="M0.5 0.5H13.5V12.5H0.5ZM0.5 8.5H13.5M4.5 0.5V8.5M9.5 0.5V8.5" fill="none" stroke="#555" />
        </svg>
      </div>
      <span className="ml-[6px] w-[8px] h-px bg-[#555]" />
      <div className="ml-[5px] w-[100px] h-px bg-[#aaa] relative">
        <span className="absolute left-[48px] -top-[5px] w-[5px] h-[11px] bg-[#777]" />
      </div>
      <svg width="9" height="9" viewBox="0 0 9 9" className="ml-[5px]">
        <path d="M4.5 0V9M0 4.5H9" stroke="#555" />
      </svg>
      <span className="ml-[12px] text-[13px] text-[#666]">100%</span>
    </div>
  );
}

export default function App() {
  return (
    <div className="w-[1366px] h-[728px] overflow-hidden flex flex-col font-['Noto_Sans_CJK_JP','Noto_Sans',sans-serif] bg-[#e6e6e6]">
      <TitleBar />
      <TabBar />
      <Ribbon />
      <FormulaBar />
      <div className="flex h-[465px]">
        <Sheet />
        <VScroll />
      </div>
      <SheetTabs />
      <StatusBar />
    </div>
  );
}
